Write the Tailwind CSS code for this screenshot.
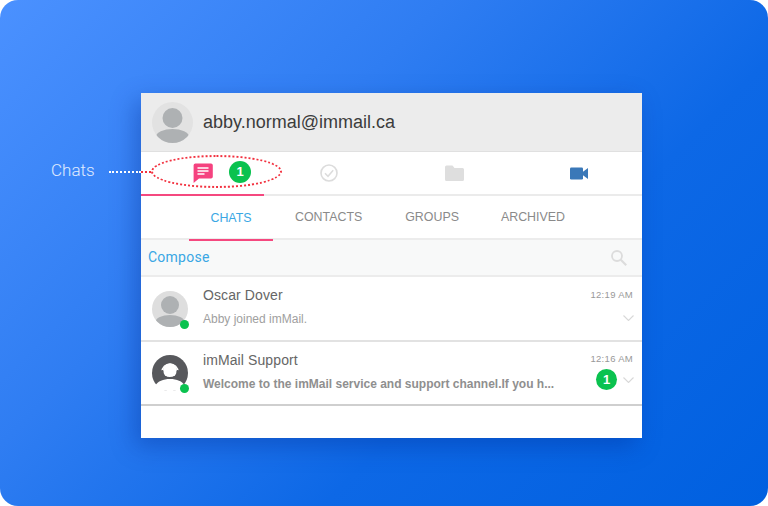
<!DOCTYPE html>
<html>
<head>
<meta charset="utf-8">
<script src="https://cdn.jsdelivr.net/npm/@tailwindcss/browser@4"></script>
</head>
<body class="bg-white overflow-hidden">
<div class="relative w-[768px] h-[506px] rounded-[18px] overflow-hidden bg-[linear-gradient(135deg,#4b91ff_0%,#2f7df2_35%,#0d68e6_65%,#0060e0_100%)] pt-[93px] pl-[141px] font-['Liberation_Sans',Arial,sans-serif]">
  <!-- card -->
  <div class="w-[501px] h-[345px] bg-white shadow-[-6px_8px_22px_rgba(0,40,140,0.35)] flex flex-col text-[#777]">
    <!-- header -->
    <div class="h-[59px] bg-[#ececec] border-b border-[#e0e0e0] flex items-center pl-[11px] gap-[10px] shrink-0">
      <svg class="w-[41px] h-[41px]" viewBox="0 0 41 41"><defs><clipPath id="a1"><circle cx="20.5" cy="20.5" r="20.5"/></clipPath></defs><circle cx="20.5" cy="20.5" r="20.5" fill="#e2e2e2"/><g clip-path="url(#a1)" fill="#aeb1b3"><circle cx="20.5" cy="16" r="10"/><ellipse cx="20.5" cy="35" rx="16.5" ry="8"/></g></svg>
      <span class="text-[18px] text-[#3c3c3c]">abby.normal@immail.ca</span>
    </div>
    <!-- icon tabs -->
    <div class="h-[44px] border-b-2 border-[#ebebeb] grid grid-cols-4 shrink-0">
      <div class="relative flex items-center justify-center">
        <svg class="w-[20px] h-[20px] -ml-[1px]" viewBox="0 0 20 20"><path d="M2.4 0.5h15.6a1.8 1.8 0 0 1 1.8 1.8v11.4a1.8 1.8 0 0 1-1.8 1.8H6L0.6 20V2.3A1.8 1.8 0 0 1 2.4 0.5z" fill="#f5427f"/><path d="M4.5 5h11M4.5 8h11M4.5 11h7" stroke="#fff" stroke-width="1.5" fill="none"/></svg>
        <span class="absolute left-[88px] top-[9px] w-[22px] h-[22px] rounded-full bg-[#0ac24f] text-white text-[13px] font-bold flex items-center justify-center">1</span>
        <span class="absolute left-0 -bottom-[2px] w-[123px] h-[2px] bg-[#f5487f]"></span>
      </div>
      <div class="flex items-center justify-center">
        <svg class="w-[18px] h-[18px]" viewBox="0 0 18 18" fill="none" stroke="#dcdcdc" stroke-width="1.6"><circle cx="9" cy="9" r="8"/><path d="M5 9.3l3 3 5.2-6" stroke-width="1.5"/></svg>
      </div>
      <div class="flex items-center justify-center">
        <svg class="w-[19px] h-[16px]" viewBox="0 0 19 16"><path d="M1.5 0.5h6l2 2.5h8a1.5 1.5 0 0 1 1.5 1.5v10a1.5 1.5 0 0 1-1.5 1.5h-16A1.5 1.5 0 0 1 0 14.5v-12.5a1.5 1.5 0 0 1 1.5-1.5z" fill="#dedede"/></svg>
      </div>
      <div class="flex items-center justify-center">
        <svg class="w-[18px] h-[13px]" viewBox="0 0 18 13"><rect x="0" y="0.5" width="13" height="12" rx="1.2" fill="#3a78b8"/><path d="M12 5.5L18 1v11l-6-4.5z" fill="#3a78b8"/></svg>
      </div>
    </div>
    <!-- text tabs -->
    <div class="h-[44px] border-b-2 border-[#ececec] flex items-start pl-[48px] text-[12.4px] text-[#8a8a8a] shrink-0">
      <div class="relative w-[84px] h-[44px] flex items-center justify-center text-[#3aa7e4]">CHATS<span class="absolute left-0 -bottom-[1px] w-full h-[2px] bg-[#f5487f]"></span></div>
      <span class="ml-[22px] leading-[42px]">CONTACTS</span>
      <span class="ml-[43px] leading-[42px]">GROUPS</span>
      <span class="ml-[42px] leading-[42px]">ARCHIVED</span>
    </div>
    <!-- compose -->
    <div class="h-[37px] bg-[#f8f9f9] border-b-2 border-[#ececec] flex items-center justify-between pl-[7px] pr-[15px] shrink-0">
      <span class="text-[14px] tracking-[0.25px] text-[#3aa7e4] font-['Roboto',sans-serif]">Compose</span>
      <svg class="w-[16px] h-[16px] mt-[1px]" viewBox="0 0 16 16" fill="none" stroke="#dcdcdc" stroke-width="1.8"><circle cx="6" cy="6" r="5"/><path d="M9.8 9.8L15.2 15.2" stroke-width="2.2"/></svg>
    </div>
    <!-- row 1 -->
    <div class="h-[65px] border-b-2 border-[#e2e2e2] flex pl-[11px] pr-[9px] shrink-0">
      <div class="relative w-[36px] h-[36px] mt-[14px] shrink-0">
        <svg class="w-[36px] h-[36px]" viewBox="0 0 36 36"><defs><clipPath id="a2"><circle cx="18" cy="18" r="18"/></clipPath></defs><circle cx="18" cy="18" r="18" fill="#dedede"/><g clip-path="url(#a2)" fill="#aeb1b3"><circle cx="18" cy="14" r="9"/><ellipse cx="18" cy="31" rx="14.5" ry="7"/></g></svg>
        <span class="absolute left-[28px] top-[29px] w-[9px] h-[9px] rounded-full bg-[#0ac24f]"></span>
      </div>
      <div class="ml-[15px] flex-1 min-w-0 relative">
        <div class="text-[14px] leading-[16px] mt-[10px] text-[#666] tracking-[0.1px]">Oscar Dover</div>
        <div class="text-[12px] leading-[14px] mt-[9px] text-[#a0a0a0]">Abby joined imMail.</div>
      </div>
      <div class="flex flex-col items-end shrink-0">
        <span class="text-[9.5px] leading-[11px] mt-[12px] text-[#999] tracking-[0.3px]">12:19 AM</span>
        <svg class="w-[11px] h-[6px] mt-[15px] mr-[-1px]" viewBox="0 0 11 6" fill="none" stroke="#d8d8d8" stroke-width="1.1"><path d="M0.5 0.5L5.5 5.5L10.5 0.5"/></svg>
      </div>
    </div>
    <!-- row 2 -->
    <div class="h-[64px] border-b-2 border-[#cfcfcf] flex pl-[11px] pr-[9px] shrink-0">
      <div class="relative w-[36px] h-[36px] mt-[13px] shrink-0">
        <svg class="w-[36px] h-[36px]" viewBox="0 0 36 36"><circle cx="18" cy="18" r="18" fill="#57585c"/><path d="M3 31c3-5 8-7 15-7s12 2 15 7c-3 3-9 5-15 5s-12-2-15-5z" fill="#fff"/><circle cx="18" cy="15.5" r="7" fill="#fff"/><path d="M10 17a8 8 0 0 1 16 0" fill="none" stroke="#fff" stroke-width="1.4"/><path d="M13 21.5c2 1.5 7 1.5 10 0" stroke="#57585c" stroke-width="1.2" fill="none"/><rect x="9" y="15" width="2.5" height="5" rx="1" fill="#57585c"/><rect x="24.5" y="15" width="2.5" height="5" rx="1" fill="#57585c"/></svg>
        <span class="absolute left-[28px] top-[29px] w-[9px] h-[9px] rounded-full bg-[#0ac24f]"></span>
      </div>
      <div class="ml-[15px] w-[380px] shrink-0">
        <div class="text-[14px] leading-[16px] mt-[10px] text-[#666] tracking-[0.1px]">imMail Support</div>
        <div class="text-[12px] leading-[14px] mt-[9px] font-bold text-[#8f8f8f] whitespace-nowrap">Welcome to the imMail service and support channel.If you h...</div>
      </div>
      <div class="flex-1 flex flex-col items-end">
        <span class="text-[9.5px] leading-[11px] mt-[11px] text-[#999] tracking-[0.3px] whitespace-nowrap">12:16 AM</span>
        <div class="flex items-center gap-[6px] mt-[5px] mr-[-1px]">
          <span class="w-[21px] h-[21px] rounded-full bg-[#0ac24f] text-white text-[13px] font-bold flex items-center justify-center">1</span>
          <svg class="w-[11px] h-[6px]" viewBox="0 0 11 6" fill="none" stroke="#d8d8d8" stroke-width="1.1"><path d="M0.5 0.5L5.5 5.5L10.5 0.5"/></svg>
        </div>
      </div>
    </div>
  </div>
  <!-- callout -->
  <span class="absolute left-[51px] top-[160px] text-[17px] leading-[20px] font-light text-white/85 font-['Roboto',sans-serif]">Chats</span>
  <span class="absolute left-[109px] top-[171px] w-[32px] border-t-2 border-dotted border-white"></span>
  <span class="absolute left-[141px] top-[171px] w-[10px] border-t-2 border-dotted border-[#f2313f]"></span>
  <span class="absolute left-[151px] top-[155px] w-[131px] h-[33px] rounded-[50%] border-2 border-dotted border-[#f2313f]"></span>
</div>
</body>
</html>
